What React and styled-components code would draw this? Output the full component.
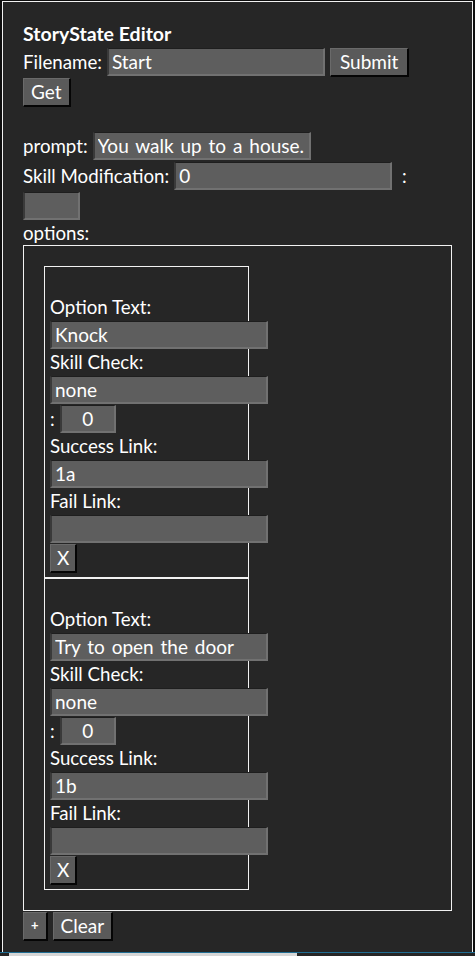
import React from "react";
import styled, { createGlobalStyle } from "styled-components";

const Global = createGlobalStyle`
  html, body { margin: 0; padding: 0; background: #0e0e0e; }
  body { font-family: Lato, "Open Sans", sans-serif; color: #fff; overflow: hidden; }
  * { box-sizing: border-box; }
`;

const Frame = styled.div`
  margin: 1px 2px 0 2px;
  border: 1px solid #f2f2f2;
  background: #262626;
  padding: 21px 20px 0 20px;
  min-height: 960px;
  font-size: 18.7px;
`;

const Title = styled.div`
  font-weight: 700;
  font-size: 19.5px;
  line-height: 22px;
  margin-bottom: 2px;
`;

const Row = styled.div`
  display: flex;
  align-items: center;
  gap: ${(p) => p.$gap ?? 4}px;
  height: ${(p) => p.$h ?? 30}px;
`;

const Text = styled.div`
  line-height: ${(p) => p.$lh ?? 24}px;
  height: ${(p) => p.$lh ?? 24}px;
  white-space: nowrap;
`;

const Input = styled.input`
  display: block;
  width: ${(p) => p.$w ?? 218}px;
  height: 28px;
  margin: ${(p) => p.$m ?? "0"};
  padding: 0 3px;
  background: #5e5e5e;
  color: #fff;
  font-family: inherit;
  font-size: 19px;
  word-spacing: 2px;
  text-align: ${(p) => (p.$center ? "center" : "left")};
  border-style: solid;
  border-width: 1px 2px 2px 2px;
  border-color: #1e1e1e #717171 #717171 #3a3a3a;
  outline: none;
  flex: none;
`;

const Button = styled.button`
  height: ${(p) => p.$h ?? 29}px;
  padding: 0 ${(p) => p.$px ?? 7}px;
  background: #5a5a5a;
  color: #fff;
  font-family: inherit;
  font-size: ${(p) => p.$fs ?? 19}px;
  font-weight: ${(p) => p.$fw ?? 400};
  line-height: 1;
  border-style: solid;
  border-width: 1px 2px 2px 1px;
  border-color: #6a6a6a #050505 #050505 #6a6a6a;
  flex: none;
  cursor: pointer;
`;

const OptionsBox = styled.div`
  border: 1px solid #f2f2f2;
  padding: 20px;
`;

const Card = styled.div`
  width: 205px;
  border: 1px solid #f2f2f2;
  padding: 27px 5px 4px 5px;
  overflow: visible;
`;

const CardLabel = styled.div`
  line-height: 26px;
  height: 26px;
  white-space: nowrap;
`;

const ScrollStrip = styled.div`
  position: fixed;
  left: 0;
  right: 0;
  bottom: 0;
  height: 4px;
  background: #262626;
  border-top: 1px solid #1f6d93;
`;

const ScrollThumb = styled.div`
  margin-left: 9px;
  width: 288px;
  height: 3px;
  background: #d6d6d6;
`;

const options = [
  { text: "Knock", check: "none", mod: "0", success: "1a", fail: "" },
  { text: "Try to open the door", check: "none", mod: "0", success: "1b", fail: "" },
];

function OptionCard({ o }) {
  return (
    <Card>
      <CardLabel>Option Text:</CardLabel>
      <Input $m="1px 0 0 0" defaultValue={o.text} />
      <CardLabel>Skill Check:</CardLabel>
      <Input $m="1px 0 0 0" defaultValue={o.check} />
      <Row $h={29} $gap={5}>
        <span>:</span>
        <Input $w={56} $m="1px 0 0 0" $center defaultValue={o.mod} />
      </Row>
      <CardLabel>Success Link:</CardLabel>
      <Input $m="1px 0 0 0" defaultValue={o.success} />
      <CardLabel>Fail Link:</CardLabel>
      <Input $m="1px 0 0 0" defaultValue={o.fail} />
      <Row $h={30}>
        <Button $px={6}>X</Button>
      </Row>
    </Card>
  );
}

export default function App() {
  return (
    <>
      <Global />
      <Frame>
        <Title>StoryState Editor</Title>
        <Row $gap={5}>
          <Text>Filename:</Text>
          <Input defaultValue="Start" />
          <Button $px={9}>Submit</Button>
        </Row>
        <Row>
          <Button>Get</Button>
        </Row>
        <Text />
        <Row $gap={5}>
          <Text>prompt:</Text>
          <Input defaultValue="You walk up to a house." />
        </Row>
        <Row $gap={5}>
          <Text>Skill Modification:</Text>
          <Input defaultValue="0" />
          <Text>&nbsp;:</Text>
        </Row>
        <Row>
          <Input $w={57} defaultValue="" />
        </Row>
        <Text>options:</Text>
        <OptionsBox>
          {options.map((o, i) => (
            <OptionCard key={i} o={o} />
          ))}
        </OptionsBox>
        <Row $gap={5}>
          <Button $px={7} $fs={13} $fw={700}>+</Button>
          <Button>Clear</Button>
        </Row>
      </Frame>
      <ScrollStrip>
        <ScrollThumb />
      </ScrollStrip>
    </>
  );
}
